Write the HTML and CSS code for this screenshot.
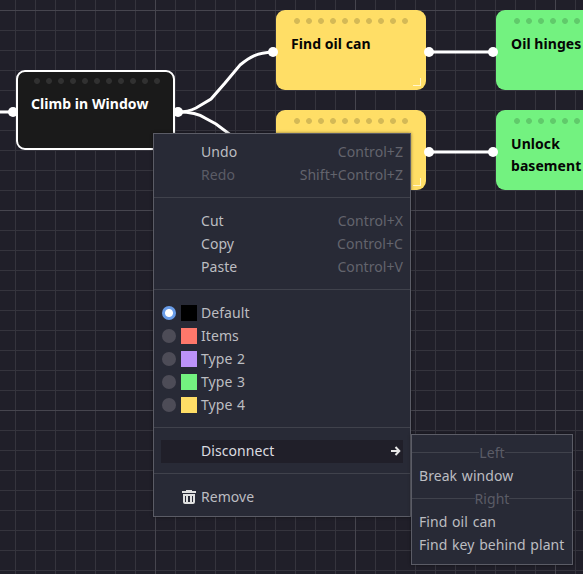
FILE: index.html
```html
<!DOCTYPE html>
<html lang="en">
<head>
<meta charset="utf-8">
<title>Graph editor</title>
<link rel="stylesheet" href="styles.css">
</head>
<body>
<main class="canvas">
  <section class="node node-default n-climb"><div class="grip"></div><h2>Climb in Window</h2></section>
  <section class="node node-yellow n-oil"><div class="grip"></div><h2>Find oil can</h2><i class="resize"></i></section>
  <section class="node node-yellow n-key"><div class="grip"></div><i class="resize"></i></section>
  <section class="node node-green n-hinges"><div class="grip"></div><h2>Oil hinges</h2></section>
  <section class="node node-green n-unlock"><div class="grip"></div><h2>Unlock basement</h2></section>

  <svg class="wires" width="583" height="574" viewBox="0 0 583 574">
    <g class="wire">
      <path d="M0 112H13"/>
      <path d="M178 112C186 112 190 111 196 108L211 99L225 83L240 65C250 57 256 53 273 52"/>
      <path d="M178 112C190 112 198 113 205 118L216 124L232 136L260 152"/>
      <path d="M429 52H493M429 152H493"/>
    </g>
    <g class="port">
      <circle cx="13" cy="112" r="5"/><circle cx="178" cy="112" r="5"/>
      <circle cx="273" cy="52" r="5"/>
      <circle cx="429" cy="52" r="5"/><circle cx="493" cy="52" r="5"/>
      <circle cx="429" cy="152" r="5"/><circle cx="493" cy="152" r="5"/>
    </g>
  </svg>

  <nav class="menu context">
    <div class="item"><span class="label">Undo</span><kbd>Control+Z</kbd></div>
    <div class="item disabled"><span class="label">Redo</span><kbd>Shift+Control+Z</kbd></div>
    <div class="sep"></div>
    <div class="item"><span class="label">Cut</span><kbd>Control+X</kbd></div>
    <div class="item"><span class="label">Copy</span><kbd>Control+C</kbd></div>
    <div class="item"><span class="label">Paste</span><kbd>Control+V</kbd></div>
    <div class="sep"></div>
    <div class="item"><i class="radio checked"></i><i class="swatch black"></i><span class="label">Default</span></div>
    <div class="item"><i class="radio"></i><i class="swatch red"></i><span class="label">Items</span></div>
    <div class="item"><i class="radio"></i><i class="swatch purple"></i><span class="label">Type 2</span></div>
    <div class="item"><i class="radio"></i><i class="swatch green"></i><span class="label">Type 3</span></div>
    <div class="item"><i class="radio"></i><i class="swatch yellow"></i><span class="label">Type 4</span></div>
    <div class="sep"></div>
    <div class="item hover"><span class="label">Disconnect</span>
      <svg class="arrow" width="16" height="16" viewBox="0 0 16 16"><path d="M4 8H12M8.5 4L12.3 8L8.5 12"/></svg>
    </div>
    <div class="sep"></div>
    <div class="item">
      <svg class="trash" width="16" height="16" viewBox="0 0 16 16"><path fill-rule="evenodd" d="M5 1H11V2H15V4H1V2H5ZM2 5H14V13A2 2 0 0 1 12 15H4A2 2 0 0 1 2 13ZM4 7V13H5V7ZM7 7V13H9V7ZM11 7V13H12V7Z"/></svg>
      <span class="label">Remove</span></div>
  </nav>

  <nav class="menu submenu">
    <div class="heading"><span>Left</span></div>
    <div class="item"><span>Break window</span></div>
    <div class="heading"><span>Right</span></div>
    <div class="item"><span>Find oil can</span></div>
    <div class="item"><span>Find key behind plant</span></div>
  </nav>
</main>
</body>
</html>
```
FILE: styles.css
```css
* { box-sizing: border-box; }
body { margin: 0; font: 14px/23px "Noto Sans", sans-serif; letter-spacing: .06px; word-spacing: 1px; }
.canvas {
  position: relative;
  width: 583px;
  height: 574px;
  overflow: hidden;
  background-color: #201f29;
  background-image:
    linear-gradient(90deg, #46454e 1px, transparent 1px),
    linear-gradient(#46454e 1px, transparent 1px),
    linear-gradient(90deg, #35343d 1px, transparent 1px),
    linear-gradient(#35343d 1px, transparent 1px);
  background-size: 200px 200px, 200px 200px, 20px 20px, 20px 20px;
  background-position: 155px 10px, 155px 10px, 15px 10px, 15px 10px;
}

/* Graph nodes */
.node {
  position: absolute;
  width: 151px;
  height: 80px;
  padding: 8px 15.5px 0;
  border-radius: 9px;
  color: #050505;
}
.node h2 { margin: 9px 0 0; font-size: 14px; line-height: 22px; font-weight: 700; word-spacing: 0; }
.grip {
  width: 120px;
  height: 6px;
  margin-left: 3px;
  background: radial-gradient(circle at 3px 3px, currentColor 2.5px, transparent 3.3px) 0 0 / 12px 6px;
  opacity: .17;
}
.node-yellow { background: #ffde66; }
.node-green { background: #73f280; }
.node-default {
  width: 159px;
  padding: 6px 13px 0;
  background: #1a1a1a;
  border: 2px solid #fff;
  color: #fff;
}
.node-default .grip { width: 132px; opacity: .1; }
.n-climb { left: 16px; top: 70px; }
.n-oil { left: 275.5px; top: 10px; }
.n-key { left: 275.5px; top: 110px; }
.n-oil, .n-key { width: 150.8px; }
.n-hinges { left: 495.5px; top: 10px; }
.n-unlock { left: 495.5px; top: 110px; }
.resize {
  position: absolute;
  right: 5px;
  bottom: 4px;
  width: 8px;
  height: 8px;
  border: solid #fff5cf;
  border-width: 0 1px 1px 0;
}

/* Connections */
.wires { position: absolute; inset: 0; }
.wire { fill: none; stroke: #fff; stroke-width: 3; }
.port { fill: #fff; }

/* Popup menus */
.menu {
  position: absolute;
  padding: 7px;
  background: #282a36;
  border: 1px solid #5b5c66;
  box-shadow: 0 0 3px rgba(0, 0, 0, .45);
  color: #bcbdc1;
}
.context { left: 153px; top: 133px; width: 258px; height: 384px; }
.submenu { left: 411px; top: 434px; width: 162px; height: 131px; }
.item { display: flex; align-items: center; height: 23px; padding-bottom: 2px; white-space: nowrap; }
.context .label { margin-left: 40px; }
.radio + .swatch + .label, .context .trash + .label { margin-left: 4px; }
.item kbd { margin-left: auto; font: inherit; color: #63646d; }
.disabled { color: #5b5c66; }
.hover { background: #201f29; color: #dcdce0; }
.sep, .heading {
  height: 23px;
  margin: 0 -7px;
  background: linear-gradient(#40424c, #40424c) 0 10px / 100% 1px no-repeat;
}
.heading { line-height: 21px; text-align: center; color: #5b5c66; }
.heading span { display: inline-block; height: 21px; background: #282a36; }
.radio { flex: none; width: 14px; height: 14px; margin: 0 5px 0 1px; border-radius: 50%; background: #4d4c57; }
.checked { background: radial-gradient(circle, #fff 3.5px, #699ce8 4.5px); }
.swatch { flex: none; width: 16px; height: 16px; }
.black { background: #000; }
.red { background: #ff786b; }
.purple { background: #bd93f9; }
.green { background: #73f280; }
.yellow { background: #ffde66; }
.trash { margin-left: 20px; fill: #e0e0e0; }
.arrow { margin-left: auto; fill: none; stroke: #e8e8e8; stroke-width: 2; }
```
